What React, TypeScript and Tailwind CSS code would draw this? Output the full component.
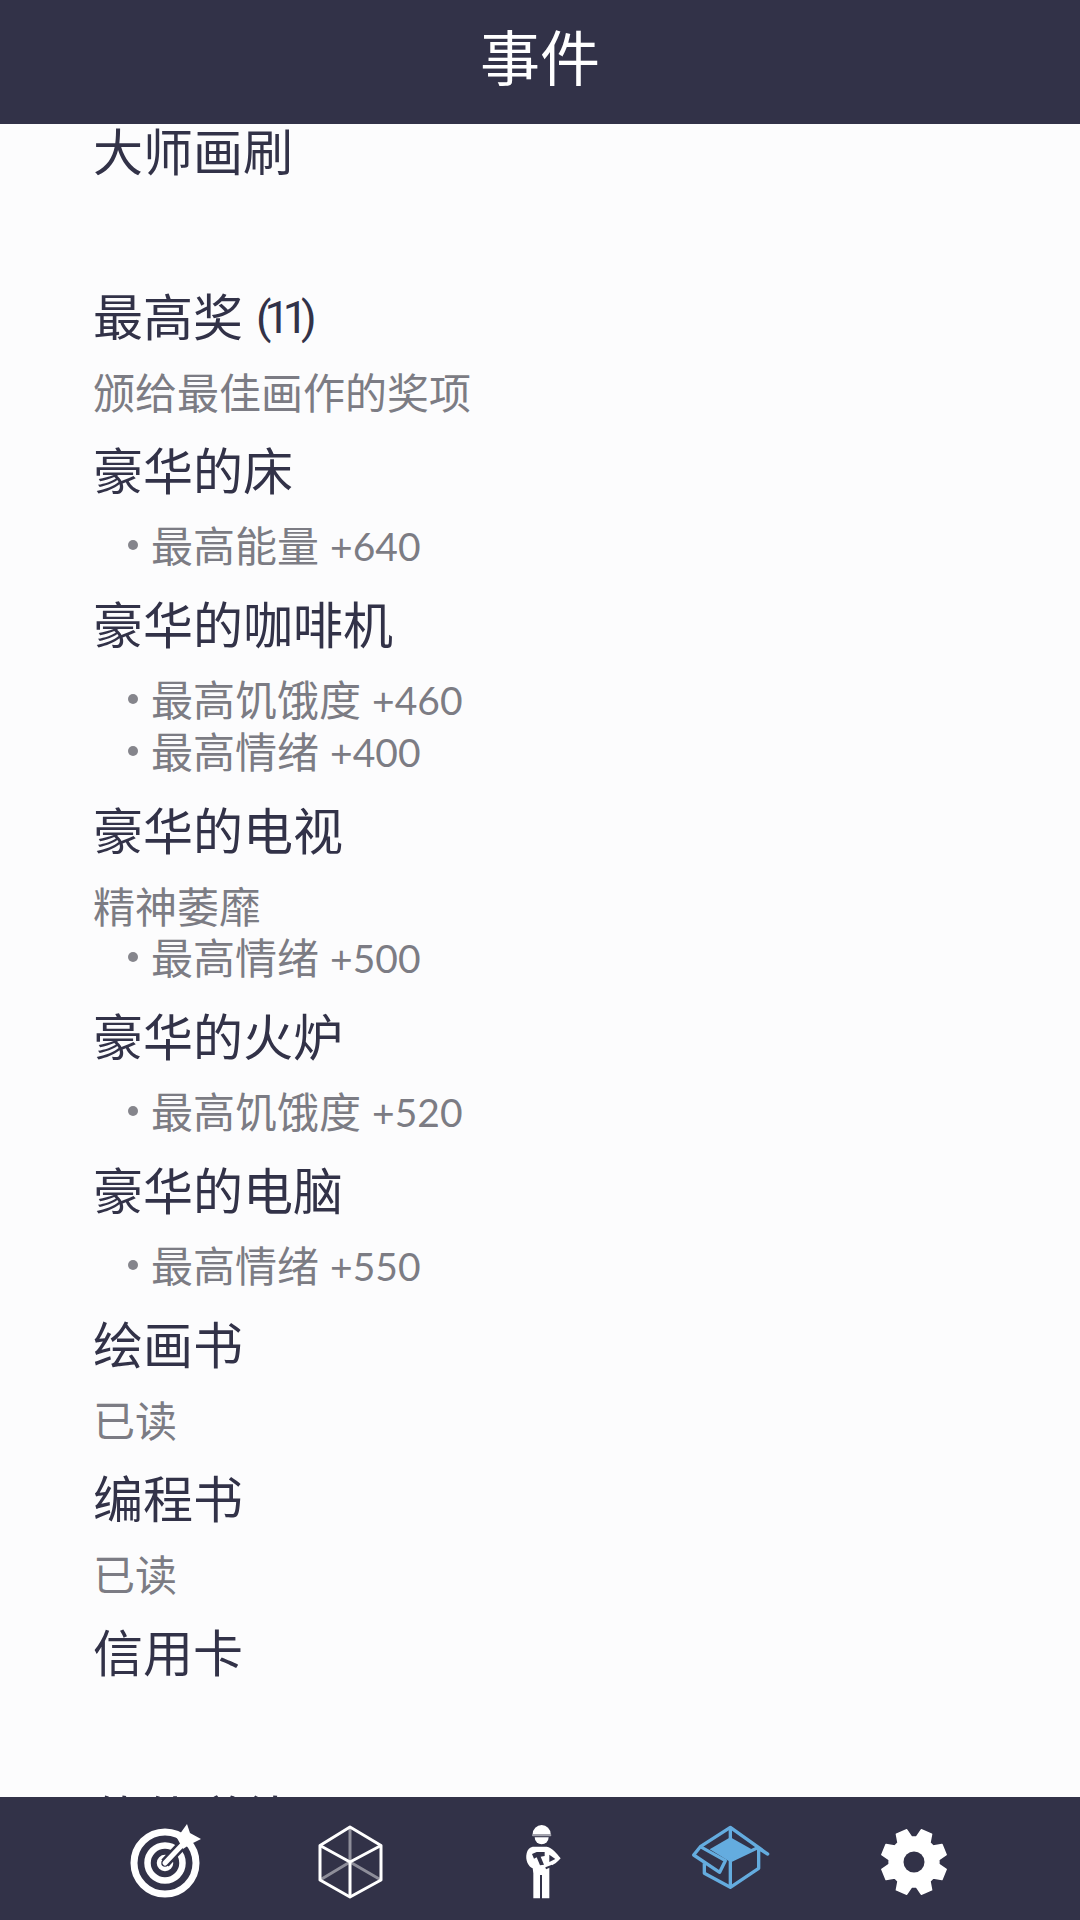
const fontStack = "font-['Lato','Noto_Sans_CJK_SC',sans-serif]";

type Item = { title: string; count?: string; desc?: string; bullets?: [string, string][]; rowClass?: string };

const items: Item[] = [
  { title: "大师画刷", rowClass: "h-[165px]" },
  { title: "最高奖", count: "(11)", desc: "颁给最佳画作的奖项" },
  { title: "豪华的床", bullets: [["最高能量", "+640"]] },
  { title: "豪华的咖啡机", bullets: [["最高饥饿度", "+460"], ["最高情绪", "+400"]] },
  { title: "豪华的电视", desc: "精神萎靡", bullets: [["最高情绪", "+500"]] },
  { title: "豪华的火炉", bullets: [["最高饥饿度", "+520"]] },
  { title: "豪华的电脑", bullets: [["最高情绪", "+550"]] },
  { title: "绘画书", desc: "已读" },
  { title: "编程书", desc: "已读" },
  { title: "信用卡", rowClass: "h-[166px]" },
  { title: "软件道德" },
];

function Row({ item }: { item: Item }) {
  return (
    <div className={item.rowClass ?? "pb-[6px]"}>
      <div className="h-[96px] pb-[2px] flex items-center text-[50px] leading-none text-[#323248]">
        {item.title}
        {item.count && (
          <span className="ml-[13px] font-['Roboto',sans-serif] text-[45px] tracking-[-7px]">{item.count}</span>
        )}
      </div>
      {item.desc && <div className="h-[52px] pt-[2px] flex items-center text-[42px] leading-none text-[#7c7c84]">{item.desc}</div>}
      {item.bullets?.map(([label, value]) => (
        <div key={label + value} className="h-[52px] flex items-center text-[42px] leading-none text-[#7c7c84]">
          <span className="w-[58px] pl-[35px] shrink-0">
            <span className="block w-[10px] h-[10px] rounded-full bg-[#85858c] mb-[3px]" />
          </span>
          <span>{label}</span>
          <span className="ml-[11px] text-[39px]">{value}</span>
        </div>
      ))}
    </div>
  );
}

function TargetIcon() {
  return (
    <svg width="76" height="76" viewBox="0 0 76 76" className="shrink-0">
      <g fill="none" stroke="#fff">
        <circle cx="40" cy="39" r="31" strokeWidth="7" />
        <circle cx="40" cy="39" r="17.5" strokeWidth="6.5" />
        <circle cx="40" cy="39" r="6" strokeWidth="4.5" />
      </g>
      <path d="M40 39 L58 20" stroke="#323248" strokeWidth="10" fill="none" />
      <path d="M40 39 L58 20" stroke="#fff" strokeWidth="5" strokeLinecap="round" fill="none" />
      <path d="M62 0 L65 9 L76 15 L64 21 L58 25 L52 14 Z" fill="#fff" />
    </svg>
  );
}

function CubeIcon() {
  return (
    <svg width="65" height="76" viewBox="0 0 65 76" className="shrink-0">
      <g fill="none" stroke="#fff" strokeWidth="3" strokeLinejoin="round">
        <path d="M32 3 L63 21.5 V56 L32 73 L2 56 V21.5 Z" />
        <path d="M2 21.5 L32 38 L63 21.5 M32 38 V73" />
        <path d="M32 3 V38 M2 56 L32 38 L63 56" strokeOpacity="0.45" />
      </g>
    </svg>
  );
}

function WorkerIcon() {
  return (
    <svg width="45" height="76" viewBox="90 42 135 228" className="shrink-0">
      <path d="M128 72 a27 27 0 0 1 54 0 Z" fill="#fff" />
      <rect x="126" y="72" width="58" height="7" rx="3" fill="#fff" fillOpacity="0.55" />
      <path d="M134 82 h42 a21 21 0 0 1 -42 0 Z" fill="#fff" />
      <path
        d="M128 110 H170 C186 112 200 130 212 145 C204 156 190 165 178 170 V190 L178 265 H156 V195 H150 V265 H130 V190 L128 175 C115 170 105 150 110 130 C112 118 120 112 128 110 Z"
        fill="#fff"
      />
      <path d="M126 132 L140 126 H164 V138 L152 140 L162 164 L150 166 L140 142 L132 146 Z" fill="#323248" />
      <path d="M178 134 L196 147 L178 156 Z" fill="#323248" />
      <path d="M166 172 L186 164 V170 L168 178 Z" fill="#323248" />
    </svg>
  );
}

function BoxIcon() {
  return (
    <svg width="85" height="76" viewBox="20 42 255 228" className="shrink-0">
      <path d="M88 118 L150 82 L214 118 L150 156 Z" fill="#64acdf" />
      <g fill="none" stroke="#64acdf" strokeWidth="10" strokeLinejoin="round">
        <path d="M60 110 L150 52 L262 132 L235 115 V175 L150 232 L72 190 V160" />
        <path d="M150 52 V90" />
        <path d="M150 152 V232 M150 152 L235 112" />
        <path d="M60 110 L135 152 L118 187 L40 135 Z" />
      </g>
    </svg>
  );
}

// eight-tooth cog, first tooth rotated 22.5 degrees off vertical
function gearPath(cx: number, cy: number) {
  const outer = 33;
  const inner = 25;
  const points: string[] = [];
  for (let i = 0; i < 8; i++) {
    const a = ((i * 45 + 22.5 - 90) * Math.PI) / 180;
    const spread = [
      [inner, -0.3],
      [outer, -0.17],
      [outer, 0.17],
      [inner, 0.3],
    ];
    for (const [r, d] of spread) {
      points.push(`${(cx + r * Math.cos(a + d)).toFixed(2)} ${(cy + r * Math.sin(a + d)).toFixed(2)}`);
    }
  }
  return `M${points.join(" L")} Z`;
}

function GearIcon() {
  return (
    <svg width="66" height="76" viewBox="0 0 66 76" className="shrink-0">
      <path d={gearPath(33, 38)} fill="#fff" stroke="#fff" strokeWidth="1.5" strokeLinejoin="round" />
      <circle cx="33" cy="38" r="10.5" fill="#323248" />
    </svg>
  );
}

export default function App() {
  return (
    <div className={`w-[1080px] h-[1920px] flex flex-col overflow-hidden bg-[#fcfcfd] ${fontStack}`}>
      <header className="h-[124px] shrink-0 bg-[#323248] flex items-center justify-center pb-[8px] text-white text-[60px]">事件</header>
      <main className="flex-1 overflow-hidden pl-[93px]">
        <div className="-mt-[19px]">
          {items.map((item) => (
            <Row key={item.title} item={item} />
          ))}
        </div>
      </main>
      <nav className="h-[123px] shrink-0 bg-[#323248] flex items-start pt-[27px] pl-[125px]">
        <TargetIcon />
        <div className="ml-[117px]"><CubeIcon /></div>
        <div className="ml-[137px]"><WorkerIcon /></div>
        <div className="ml-[122px]"><BoxIcon /></div>
        <div className="ml-[109px]"><GearIcon /></div>
      </nav>
    </div>
  );
}
